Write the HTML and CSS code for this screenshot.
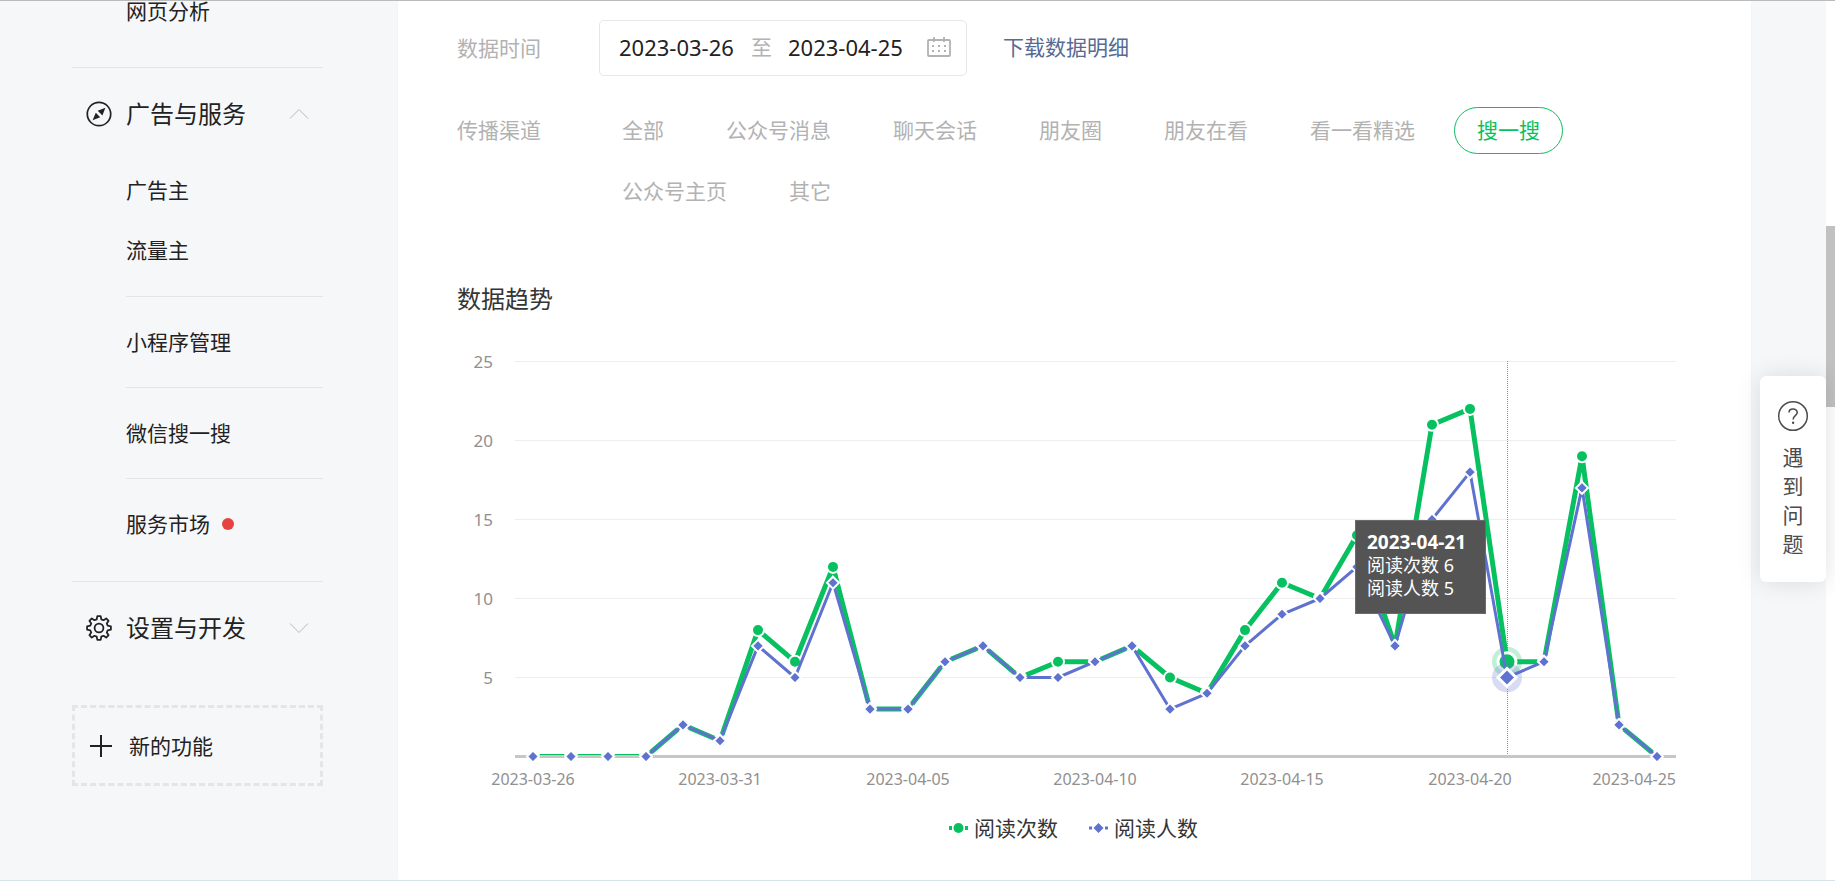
FILE: index.html
```html
<!DOCTYPE html>
<html lang="zh-CN">
  <head>
    <meta charset="UTF-8" />
    <meta name="viewport" content="width=device-width, initial-scale=1.0" />
    <title>内容分析</title>
    <link rel="stylesheet" href="styles.css">
  </head>
  <body>
    <div class="page">
      <nav class="sidebar">
        <a class="menu-link first" href="#">网页分析</a>

        <section class="menu-group">
          <button class="menu-title">
            <svg class="menu-icon" viewBox="0 0 26 26" width="26" height="26">
              <circle cx="13" cy="13" r="11.7" fill="none" stroke="#222" stroke-width="1.7" />
              <path d="M19.4 6.8 L16.4 14.4 L11.7 9.8 Z M6.6 19.2 L9.8 11.8 L14.2 16.2 Z" fill="#222" />
            </svg>
            <span>广告与服务</span>
            <svg class="chevron" viewBox="0 0 20 12" width="20" height="12">
              <path d="M1 10.5 L10 1.5 L19 10.5" />
            </svg>
          </button>
          <a class="menu-link" href="#">广告主</a>
          <a class="menu-link" href="#">流量主</a>
          <div class="menu-sub">
            <a class="menu-link" href="#">小程序管理</a>
            <a class="menu-link" href="#">微信搜一搜</a>
            <a class="menu-link" href="#">服务市场<i class="dot"></i></a>
          </div>
        </section>

        <section class="menu-group">
          <button class="menu-title">
            <svg class="menu-icon" viewBox="0 0 26 26" width="26" height="26">
              <path id="gear" fill="none" stroke="#222" stroke-width="1.8" stroke-linejoin="round" />
              <circle cx="13" cy="13" r="4.4" fill="none" stroke="#222" stroke-width="1.8" />
            </svg>
            <span>设置与开发</span>
            <svg class="chevron" viewBox="0 0 20 12" width="20" height="12">
              <path d="M1 1.5 L10 10.5 L19 1.5" />
            </svg>
          </button>
        </section>

        <button class="new-feature">
          <svg viewBox="0 0 24 24" width="24" height="24">
            <path d="M12 1 V23 M1 12 H23" stroke="#222" stroke-width="2" />
          </svg>
          <span>新的功能</span>
        </button>
      </nav>

      <main class="content">
        <div class="filter-row">
          <label class="filter-label" for="date-from">数据时间</label>
          <div class="date-range">
            <input type="text" id="date-from" value="2023-03-26" />
            <label for="date-to">至</label>
            <input type="text" id="date-to" value="2023-04-25" />
            <svg class="calendar" viewBox="0 0 24 20" width="24" height="20">
              <rect x="1" y="3" width="22" height="16" rx="1" fill="none" stroke="#b2b2b2" stroke-width="1.8" />
              <path d="M7 0 V5 M17 0 V5" stroke="#b2b2b2" stroke-width="1.8" />
              <path d="M5 9 H19 M5 14 H19" stroke="#b2b2b2" stroke-width="2" stroke-dasharray="2 4" />
            </svg>
          </div>
          <a class="download" href="#">下载数据明细</a>
        </div>

        <div class="filter-row channel-row">
          <span class="filter-label">传播渠道</span>
          <div class="channels">
            <button class="channel">全部</button>
            <button class="channel">公众号消息</button>
            <button class="channel">聊天会话</button>
            <button class="channel">朋友圈</button>
            <button class="channel">朋友在看</button>
            <button class="channel">看一看精选</button>
            <button class="channel active">搜一搜</button>
            <button class="channel">公众号主页</button>
            <button class="channel">其它</button>
          </div>
        </div>

        <h2>数据趋势</h2>

        <div class="chart">
          <svg id="trend" viewBox="0 0 1235 455"></svg>
          <div class="tooltip" id="tooltip"></div>
        </div>

        <div class="legend">
          <span class="legend-item">
            <svg viewBox="0 0 19 14" width="19" height="14">
              <path d="M0 7 H3 M16 7 H19" stroke="#07c160" stroke-width="4" />
              <circle cx="9.5" cy="7" r="5" fill="#07c160" />
            </svg>
            阅读次数
          </span>
          <span class="legend-item">
            <svg viewBox="0 0 19 14" width="19" height="14">
              <path d="M0 7 H3 M16 7 H19" stroke="#5f72cf" stroke-width="3" />
              <path d="M9.5 2 L14.5 7 L9.5 12 L4.5 7 Z" fill="#5f72cf" />
            </svg>
            阅读人数
          </span>
        </div>
      </main>

      <div class="scrollbar"><div class="thumb"></div></div>

      <button class="help">
        <svg viewBox="0 0 32 32" width="32" height="32">
          <circle cx="16" cy="16" r="14.3" fill="none" stroke="#4c4c4c" stroke-width="1.5" />
          <path d="M12 12.6 C12 7.8 20.2 7.8 20.2 12.5 C20.2 15.6 16.1 15.6 16.1 19.4" fill="none" stroke="#4c4c4c" stroke-width="1.6" />
          <circle cx="16.1" cy="22.8" r="1.2" fill="#4c4c4c" />
        </svg>
        <span>遇到问题</span>
      </button>
    </div>

    <script>
      const reads = [
        0, 0, 0, 0, 2, 1, 8, 6, 12, 3, 3, 6, 7, 5, 6, 6, 7, 5, 4, 8, 11, 10,
        14, 7, 21, 22, 6, 6, 19, 2, 0,
      ];
      const readers = [
        0, 0, 0, 0, 2, 1, 7, 5, 11, 3, 3, 6, 7, 5, 5, 6, 7, 3, 4, 7, 9, 10,
        12, 7, 15, 18, 5, 6, 17, 2, 0,
      ];
      const active = 26;
      const plot = { left: 58, right: 1219, top: 16.5, bottom: 411.5 };
      const chartWidth = 1235;
      const chartHeight = 455;

      const step = (plot.right - plot.left) / reads.length;
      const x = (i) => Math.floor(plot.left + step * (i + 0.5));
      const y = (v) => plot.bottom - ((plot.bottom - plot.top) * v) / 25;

      function dateAt(i) {
        const d = new Date(Date.UTC(2023, 2, 26 + i));
        return d.toISOString().slice(0, 10);
      }

      function line(data, cls) {
        const points = data.map((v, i) => `${x(i)},${y(v)}`).join(" ");
        return `<polyline class="${cls}" points="${points}" clip-path="url(#plot)" />`;
      }

      function diamond(cx, cy, r) {
        return `M${cx} ${cy - r} L${cx + r} ${cy} L${cx} ${cy + r} L${cx - r} ${cy} Z`;
      }

      let svg = `<defs><clipPath id="plot"><rect x="${plot.left}" y="0" width="${plot.right - plot.left}" height="${plot.bottom}" /></clipPath></defs>`;

      // grid and y labels
      for (let v = 5; v <= 25; v += 5) {
        svg += `<line class="grid" x1="${plot.left}" x2="${plot.right}" y1="${y(v)}" y2="${y(v)}" />`;
        svg += `<text class="y-label" x="36" y="${y(v) + 6}">${v}</text>`;
      }
      // x labels, the last one is kept inside the plot
      for (let i = 0; i < reads.length; i += 5) {
        const last = i === reads.length - 1;
        svg += `<text class="x-label" x="${last ? plot.right : x(i)}" y="440" text-anchor="${last ? "end" : "middle"}">${dateAt(i)}</text>`;
      }

      svg += `<line class="crosshair" x1="${x(active) + 0.5}" x2="${x(active) + 0.5}" y1="${Math.floor(plot.top)}" y2="${plot.bottom}" />`;
      svg += line(reads, "reads-line");
      svg += `<circle class="reads-halo" cx="${x(active)}" cy="${y(reads[active])}" r="15" />`;
      reads.forEach((v, i) => {
        const on = i === active;
        svg += `<circle class="reads-dot${on ? " on" : ""}" cx="${x(i)}" cy="${y(v)}" r="${on ? 9 : 6}" />`;
      });
      svg += line(readers, "readers-line");
      svg += `<line class="axis" x1="${plot.left}" x2="${plot.right}" y1="${plot.bottom}" y2="${plot.bottom}" />`;
      svg += `<circle class="readers-halo" cx="${x(active)}" cy="${y(readers[active])}" r="15" />`;
      readers.forEach((v, i) => {
        const on = i === active;
        svg += `<path class="readers-dot${on ? " on" : ""}" d="${diamond(x(i), y(v), on ? 9 : 6)}" />`;
      });
      document.getElementById("trend").innerHTML = svg;

      const tooltip = document.getElementById("tooltip");
      tooltip.style.right = `${((chartWidth - x(active) + 21) / chartWidth) * 100}%`;
      tooltip.style.top = `${(y(15) / chartHeight) * 100}%`;
      tooltip.innerHTML = `
        <strong>${dateAt(active)}</strong>
        <div>阅读次数 ${reads[active]}</div>
        <div>阅读人数 ${readers[active]}</div>
      `;

      // settings icon, eight teeth round the ring
      let gear = "";
      for (let i = 0; i < 8; i++) {
        [[-0.26, 9], [-0.14, 12], [0.14, 12], [0.26, 9]].forEach(([a, r]) => {
          const t = (i * Math.PI) / 4 + a;
          gear += `${gear ? "L" : "M"}${13 + r * Math.sin(t)} ${13 - r * Math.cos(t)} `;
        });
      }
      document.getElementById("gear").setAttribute("d", gear + "Z");
    </script>
  </body>
</html>
```
FILE: styles.css
```css
* {
  box-sizing: border-box;
}

body {
  margin: 0;
  background: #f6f7f9;
  color: #222;
  font-family: "Noto Sans", "Noto Sans CJK SC", sans-serif;
  font-size: 21px;
  line-height: 30px;
}

button,
input {
  font: inherit;
  color: inherit;
  padding: 0;
  border: none;
  background: none;
}

button {
  cursor: pointer;
}

a {
  color: inherit;
  text-decoration: none;
}

svg {
  display: block;
  flex: none;
}

.page {
  display: flex;
  position: relative;
  height: 100vh;
  overflow: hidden;
  border-top: 1px solid #bbb;
  border-bottom: 1px solid #d5e4ec;
}

/* sidebar */
.sidebar {
  flex: none;
  width: 398px;
  padding: 0 75px 0 72px;
}

.menu-link {
  display: flex;
  align-items: center;
  height: 60px;
  padding-left: 54px;
}

.menu-link.first {
  height: 21px;
  margin-bottom: 45px;
  line-height: 21px;
}

.menu-group {
  border-top: 1px solid #e4e5e6;
}

.menu-title {
  display: flex;
  align-items: center;
  width: 100%;
  height: 92px;
  padding: 0 14px;
  font-size: 24px;
}

.menu-icon {
  margin-right: 14px;
}

.chevron {
  margin-left: auto;
  fill: none;
  stroke: #b8b9bb;
}

.menu-sub {
  margin: 16px 0 12px 54px;
}

.menu-sub .menu-link {
  height: 91px;
  padding-left: 0;
  border-top: 1px solid #e4e5e6;
}

.dot {
  width: 12px;
  height: 12px;
  margin-left: 12px;
  border-radius: 50%;
  background: #e64340;
}

.new-feature {
  display: flex;
  align-items: center;
  gap: 16px;
  width: 100%;
  height: 81px;
  margin-top: 31px;
  padding-left: 14px;
  border: 3px dashed #e4e5e6;
}

/* content */
.content {
  flex: 1;
  min-width: 0;
  margin-right: 75px;
  padding: 19px 59px 0;
  background: #fff;
  box-shadow: 0 0 4px rgba(0, 0, 0, 0.03);
}

.filter-row {
  display: flex;
  align-items: center;
}

.filter-label {
  flex: none;
  width: 142px;
  color: #b2b2b2;
}

.date-range {
  display: flex;
  align-items: center;
  gap: 16px;
  width: 368px;
  height: 56px;
  padding: 0 15px 2px 19px;
  border: 1px solid #e4e8eb;
  border-radius: 5px;
  color: #b2b2b2;
}

.date-range input {
  width: 116px;
  font-size: 22px;
  color: #222;
}

.calendar {
  margin-left: auto;
}

.download {
  margin-left: 36px;
  padding-bottom: 2px;
  color: #576b95;
}

.channel-row {
  align-items: flex-start;
  margin-top: 31px;
}

.channel-row .filter-label {
  line-height: 47px;
}

.channels {
  display: flex;
  flex-wrap: wrap;
  gap: 14px 16px;
}

.channel {
  height: 47px;
  padding: 0 22px 2px;
  border: 1px solid transparent;
  border-radius: 24px;
  color: #b2b2b2;
}

.channel.active {
  border-color: #07c160;
  color: #07c160;
}

h2 {
  margin: 69px 0 31px;
  font-size: 24px;
  font-weight: normal;
  color: #353535;
}

/* chart */
.chart {
  position: relative;
}

.chart svg {
  width: 100%;
}

.grid {
  stroke: #eee;
}

.axis {
  stroke: #c6c6c6;
  stroke-width: 3;
}

.x-label,
.y-label {
  font-size: 16px;
  fill: #909090;
}

.y-label {
  font-size: 17px;
  text-anchor: end;
}

.crosshair {
  stroke: #6fb62c;
  stroke-dasharray: 1 1;
  shape-rendering: crispEdges;
}

.reads-line,
.readers-line {
  fill: none;
  stroke: #07c160;
  stroke-width: 5;
  stroke-linejoin: round;
}

.readers-line {
  stroke: #5f72cf;
  stroke-width: 3;
}

.reads-dot {
  fill: #07c160;
  stroke: #fff;
  stroke-width: 2;
}

.readers-dot {
  fill: #5f72cf;
  stroke: #fff;
  stroke-width: 2;
}

.reads-dot.on,
.readers-dot.on {
  stroke-width: 3;
}

.reads-halo {
  fill: #07c160;
  opacity: 0.25;
}

.readers-halo {
  fill: #5f72cf;
  opacity: 0.25;
}

.tooltip {
  position: absolute;
  width: 131px;
  padding: 10px 0 13px 11px;
  border: 1px solid #6b6b6b;
  background: #545454;
  color: #fff;
  font-size: 18px;
  line-height: 23px;
  white-space: nowrap;
}

.tooltip strong {
  display: block;
  font-size: 19px;
  font-weight: 700;
}

.legend {
  display: flex;
  justify-content: center;
  gap: 31px;
  margin-top: 13px;
  padding-right: 2px;
  color: #353535;
}

.legend-item {
  display: flex;
  align-items: center;
  gap: 6px;
}

/* help tab and scrollbar */
.help {
  position: absolute;
  top: 375px;
  right: 9px;
  display: flex;
  flex-direction: column;
  align-items: center;
  gap: 11px;
  width: 66px;
  padding: 24px 0 23px;
  border-radius: 6px;
  background: #fff;
  box-shadow: 0 0 24px rgba(0, 0, 0, 0.12);
  color: #4c4c4c;
  line-height: 29px;
}

.help span {
  width: 21px;
}

.scrollbar {
  flex: none;
  width: 9px;
  padding-top: 225px;
  background: #fff;
}

.thumb {
  height: 181px;
  background: #c1c1c1;
}
```
